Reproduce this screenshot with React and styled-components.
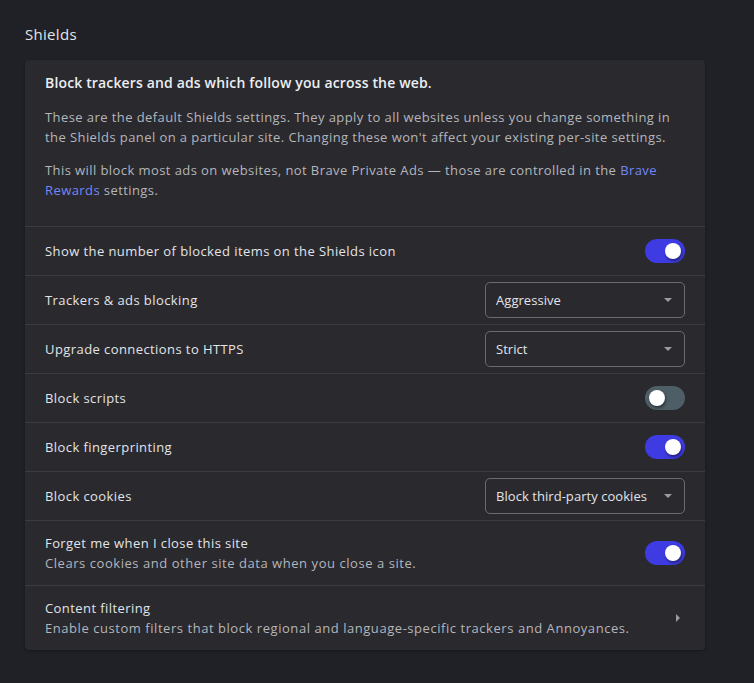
import React from "react";
import styled, { createGlobalStyle } from "styled-components";

const Global = createGlobalStyle`
  html, body { margin: 0; padding: 0; background: #202127; }
  body { font-family: "Open Sans", "Noto Sans", sans-serif; -webkit-font-smoothing: antialiased; }
  #root { min-height: 683px; }
`;

const Page = styled.div`
  padding: 24px 49px 32px 25px;
  min-height: 683px;
  box-sizing: border-box;
  background: #202127;
`;

const PageTitle = styled.h1`
  margin: 0 0 16px;
  font-size: 15px;
  font-weight: 400;
  line-height: 20px;
  letter-spacing: 0.3px;
  color: #e3e4e8;
`;

const Card = styled.section`
  background: #29292e;
  border-radius: 4px;
  box-shadow: 0 1px 3px rgba(0, 0, 0, 0.35);
  overflow: hidden;
  letter-spacing: 0.42px;
`;

const Intro = styled.div`
  padding: 13px 20px 26px;
`;

const IntroTitle = styled.h2`
  margin: 0 0 14px;
  font-size: 14px;
  font-weight: 600;
  line-height: 20px;
  letter-spacing: 0.15px;
  color: #eceef2;
`;

const Para = styled.p`
  margin: 0 0 13px;
  font-size: 13px;
  line-height: 20px;
  color: #b4b6bc;
  &:last-child { margin-bottom: 0; }
`;

const Link = styled.a`
  color: #7586f5;
  text-decoration: none;
`;

const Row = styled.div`
  display: flex;
  align-items: center;
  justify-content: space-between;
  min-height: ${(p) => (p.$tall ? 64 : 48)}px;
  padding: 0 20px;
  border-top: 1px solid #3b3c42;
  box-sizing: content-box;
`;

const Labels = styled.div`
  display: flex;
  flex-direction: column;
`;

const Label = styled.div`
  font-size: 13px;
  line-height: 20px;
  color: #e3e4e8;
`;

const Sub = styled.div`
  font-size: 13px;
  line-height: 20px;
  color: #b4b6bc;
  letter-spacing: 0.55px;
`;

const Track = styled.div`
  position: relative;
  width: 40px;
  height: 24px;
  border-radius: 12px;
  background: ${(p) => (p.$on ? "#3e3be3" : "#4e5e66")};
  flex-shrink: 0;
`;

const Knob = styled.div`
  position: absolute;
  top: 4px;
  left: ${(p) => (p.$on ? 20 : 4)}px;
  width: 16px;
  height: 16px;
  border-radius: 50%;
  background: #ffffff;
  box-shadow: 1px 2px 3px rgba(0, 0, 0, 0.45);
`;

const Toggle = ({ on }) => (
  <Track $on={on}>
    <Knob $on={on} />
  </Track>
);

const SelectBox = styled.div`
  display: flex;
  align-items: center;
  justify-content: space-between;
  width: 200px;
  height: 36px;
  box-sizing: border-box;
  padding: 0 12px 0 10px;
  border: 1px solid #6a6c72;
  border-radius: 5px;
  font-size: 13px;
  letter-spacing: 0.05px;
  color: #e3e4e8;
`;

const Caret = styled.span`
  width: 0;
  height: 0;
  border-left: 4px solid transparent;
  border-right: 4px solid transparent;
  border-top: 4px solid #9a9ca2;
`;

const Select = ({ value }) => (
  <SelectBox>
    <span>{value}</span>
    <Caret />
  </SelectBox>
);

const Chevron = styled.span`
  width: 0;
  height: 0;
  margin-right: 5px;
  border-top: 4px solid transparent;
  border-bottom: 4px solid transparent;
  border-left: 4px solid #9a9ca2;
`;

export default function App() {
  return (
    <>
      <Global />
      <Page>
        <PageTitle>Shields</PageTitle>
        <Card>
          <Intro>
            <IntroTitle>Block trackers and ads which follow you across the web.</IntroTitle>
            <Para>
              These are the default Shields settings. They apply to all websites unless you change something in
              the Shields panel on a particular site. Changing these won't affect your existing per-site settings.
            </Para>
            <Para>
              This will block most ads on websites, not Brave Private Ads — those are controlled in the{" "}
              <Link href="#">Brave Rewards</Link> settings.
            </Para>
          </Intro>
          <Row>
            <Label>Show the number of blocked items on the Shields icon</Label>
            <Toggle on />
          </Row>
          <Row>
            <Label>Trackers &amp; ads blocking</Label>
            <Select value="Aggressive" />
          </Row>
          <Row>
            <Label>Upgrade connections to HTTPS</Label>
            <Select value="Strict" />
          </Row>
          <Row>
            <Label>Block scripts</Label>
            <Toggle on={false} />
          </Row>
          <Row>
            <Label>Block fingerprinting</Label>
            <Toggle on />
          </Row>
          <Row>
            <Label>Block cookies</Label>
            <Select value="Block third-party cookies" />
          </Row>
          <Row $tall>
            <Labels>
              <Label>Forget me when I close this site</Label>
              <Sub>Clears cookies and other site data when you close a site.</Sub>
            </Labels>
            <Toggle on />
          </Row>
          <Row $tall>
            <Labels>
              <Label>Content filtering</Label>
              <Sub>Enable custom filters that block regional and language-specific trackers and Annoyances.</Sub>
            </Labels>
            <Chevron />
          </Row>
        </Card>
      </Page>
    </>
  );
}
